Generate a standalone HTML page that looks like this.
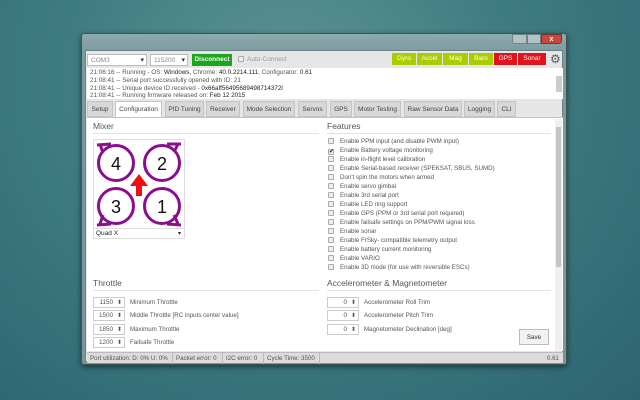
<!DOCTYPE html>
<html><head><style>
*{margin:0;padding:0;box-sizing:border-box}
body{width:640px;height:400px;overflow:hidden;position:relative;font-family:"Liberation Sans",sans-serif;font-size:6.5px;color:#333;
background:radial-gradient(ellipse at 45% 20%,#5b9393 0%,#3f7c82 45%,#2c6470 100%);}
.a{position:absolute}
.win{left:81px;top:33px;width:486px;height:332px;background:linear-gradient(#8eaaac,#7a9a9d 20px,#7b9699);border:1px solid #3d5557;border-radius:3px;box-shadow:0 2px 6px rgba(0,0,0,.5)}
.inner{left:3px;top:16px;width:478px;height:312px;background:#e6e6e6;border:1px solid #6b8385}
.sel{background:#fff;border:1px solid #bbb;height:12px;color:#888;padding:2px 3px;font-size:6.5px}
.sel:after{content:"▾";position:absolute;right:2px;top:1px;color:#333;font-size:7px}
.sen{top:2px;height:12px;color:#fff;text-align:center;line-height:12px;font-size:6.5px}
.g{background:#aacc00}.r{background:#e1141c}
.tab{top:0;height:16px;border:1px solid #c4c4c4;background:#d8d8d8;line-height:15px;text-align:center;font-size:6.5px;color:#444}
.feat{left:1px;font-size:6.2px;color:#555;white-space:nowrap}
.cb{display:inline-block;width:6px;height:6px;border:1px solid #aaa;background:#eee;margin-right:6px;vertical-align:-1px;border-radius:1px}
.h{font-size:8.5px;color:#555}
.hl{height:1px;background:#e2e2e2}
.inp{width:32px;height:11px;border:1px solid #ccc;background:#fff;text-align:right;padding-right:11px;font-size:6.3px;line-height:10px;color:#555}
.inp:after{content:"⬍";position:absolute;right:2px;top:0;font-size:6px;color:#555}
.lb{font-size:6.2px;color:#555;white-space:nowrap}
.st{top:0;height:11px;line-height:11px;border-right:1px solid #bbb;padding:0 3px;font-size:6.2px;color:#555;white-space:nowrap;overflow:hidden}
</style></head><body>
<div class="a win">
 <div class="a" style="right:4px;top:0;width:50px;height:11px;">
  <div class="a" style="left:0;top:0;width:15px;height:10px;background:#b3c2c4;border:1px solid #6e8587;border-radius:0 0 0 3px"></div>
  <div class="a" style="left:15px;top:0;width:14px;height:10px;background:#b3c2c4;border:1px solid #6e8587"></div>
  <div class="a" style="left:29px;top:0;width:21px;height:10px;background:#c8493b;border:1px solid #6e3a33;border-radius:0 0 3px 0;color:#fff;font-size:7px;text-align:center;line-height:9px;font-weight:bold">x</div>
 </div>
 <div class="a inner">
  <div class="a sel" style="left:1px;top:3px;width:60px">COM3</div>
  <div class="a sel" style="left:64px;top:3px;width:38px">115200</div>
  <div class="a" style="left:106px;top:3px;width:40px;height:12px;background:#1ea51e;color:#fff;font-weight:bold;text-align:center;line-height:12px;font-size:6.5px">Disconnect</div>
  <div class="a" style="left:152px;top:5px;color:#999"><span class="cb" style="margin-right:3px"></span>Auto-Connect</div>
  <div class="a sen g" style="left:306px;width:24px">Gyro</div>
  <div class="a sen g" style="left:331px;width:25px">Accel</div>
  <div class="a sen g" style="left:357px;width:25px">Mag</div>
  <div class="a sen g" style="left:383px;width:24px">Baro</div>
  <div class="a sen r" style="left:408px;width:23px">GPS</div>
  <div class="a sen r" style="left:432px;width:28px">Sonar</div>
  <div class="a" style="left:464px;top:1px;font-size:12px;color:#555">⚙</div>
  <div class="a" style="left:1px;top:17px;width:476px;height:31px;background:#fff;font-size:6.3px;line-height:7.8px;padding:1px 3px;color:#555">
   21:06:16 -- Running - OS: <span style="color:#222">Windows</span>, Chrome: <span style="color:#222">40.0.2214.111</span>, Configurator: <span style="color:#222">0.61</span><br>
   21:08:41 -- Serial port successfully opened with ID: 21<br>
   21:08:41 -- Unique device ID received - <span style="color:#222">0x66aff56495689498714372l</span><br>
   21:08:41 -- Running firmware released on: <span style="color:#222">Feb 12 2015</span>
   <div class="a" style="right:1px;top:8px;width:6px;height:16px;background:#ccc"></div>
  </div>
  <div class="a" style="left:0;top:50px;width:476px;height:17px">
   <div class="a tab" style="left:1px;width:26px">Setup</div>
   <div class="a tab" style="left:29px;width:47px;background:#fff;border-bottom-color:#fff;height:17px">Configuration</div>
   <div class="a tab" style="left:79px;width:39px">PID Tuning</div>
   <div class="a tab" style="left:120px;width:34px">Receiver</div>
   <div class="a tab" style="left:157px;width:52px">Mode Selection</div>
   <div class="a tab" style="left:212px;width:29px">Servos</div>
   <div class="a tab" style="left:244px;width:22px">GPS</div>
   <div class="a tab" style="left:268px;width:47px">Motor Testing</div>
   <div class="a tab" style="left:318px;width:58px">Raw Sensor Data</div>
   <div class="a tab" style="left:378px;width:31px">Logging</div>
   <div class="a tab" style="left:411px;width:19px">CLI</div>
  </div>
  <div class="a" style="left:1px;top:66px;width:476px;height:234px;background:#fff;border-top:1px solid #c4c4c4">
   <div class="a" style="right:1px;top:1px;width:7px;height:232px;background:#f0f0f0">
    <div class="a" style="left:1px;top:8px;width:5px;height:140px;background:#c4c4c4"></div>
   </div>
   <div class="a h" style="left:6px;top:3px">Mixer</div>
   <div class="a hl" style="left:6px;top:15px;width:226px"></div>
   <div class="a h" style="left:240px;top:3px">Features</div>
   <div class="a hl" style="left:240px;top:15px;width:224px"></div>
   <div class="a" style="left:6px;top:21px;width:92px;height:100px;border:1px solid #ddd;background:#fff">
    <svg width="90" height="88" viewBox="0 0 90 88" class="a" style="left:0;top:0">
     <g fill="none" stroke="#8a0f8e" stroke-width="3">
      <circle cx="22" cy="23" r="17.5"/><circle cx="68" cy="23" r="17.5"/>
      <circle cx="22" cy="66" r="17.5"/><circle cx="68" cy="66" r="17.5"/>
      <path d="M3 5 L17 4 M6 4 L9 13"/><path d="M87 4 L73 4 M84 4 L80 12"/>
      <path d="M3 85 L17 84 M6 84 L9 75"/><path d="M87 85 L73 84 M84 84 L80 75"/>
     </g>
     <g font-family="Liberation Sans" font-size="18" fill="#111" text-anchor="middle">
      <text x="22" y="30">4</text><text x="68" y="30">2</text><text x="22" y="73">3</text><text x="68" y="73">1</text>
     </g>
     <path d="M45 34 L54 46 L48 46 L48 56 L42 56 L42 46 L36 46Z" fill="#ee1111"/>
    </svg>
    <div class="a" style="left:0;top:88px;width:90px;height:11px;border-top:1px solid #ddd;font-size:6.5px;line-height:10px;padding-left:2px;color:#223">Quad X<span class="a" style="right:3px;top:0;font-size:6px">▾</span></div>
   </div>
   <div class="a" style="left:240px;top:20px;width:220px;height:140px">
    <div class="a feat" style="top:0"><span class="cb"></span>Enable PPM input (and disable PWM input)</div>
    <div class="a feat" style="top:9px"><span class="cb" style="font-size:6px;line-height:4px;color:#222">✔</span>Enable Battery voltage monitoring</div>
    <div class="a feat" style="top:18px"><span class="cb"></span>Enable in-flight level calibration</div>
    <div class="a feat" style="top:27px"><span class="cb"></span>Enable Serial-based receiver (SPEKSAT, SBUS, SUMD)</div>
    <div class="a feat" style="top:36px"><span class="cb"></span>Don't spin the motors when armed</div>
    <div class="a feat" style="top:45px"><span class="cb"></span>Enable servo gimbal</div>
    <div class="a feat" style="top:54px"><span class="cb"></span>Enable 3rd serial port</div>
    <div class="a feat" style="top:63px"><span class="cb"></span>Enable LED ring support</div>
    <div class="a feat" style="top:72px"><span class="cb"></span>Enable GPS (PPM or 3rd serial port required)</div>
    <div class="a feat" style="top:81px"><span class="cb"></span>Enable failsafe settings on PPM/PWM signal loss</div>
    <div class="a feat" style="top:90px"><span class="cb"></span>Enable sonar</div>
    <div class="a feat" style="top:99px"><span class="cb"></span>Enable FrSky- compatible telemetry output</div>
    <div class="a feat" style="top:108px"><span class="cb"></span>Enable battery current monitoring</div>
    <div class="a feat" style="top:117px"><span class="cb"></span>Enable VARIO</div>
    <div class="a feat" style="top:126px"><span class="cb"></span>Enable 3D mode (for use with reversible ESCs)</div>
   </div>
   <div class="a h" style="left:6px;top:160px">Throttle</div>
   <div class="a hl" style="left:6px;top:172px;width:226px"></div>
   <div class="a h" style="left:240px;top:160px">Accelerometer &amp; Magnetometer</div>
   <div class="a hl" style="left:240px;top:172px;width:224px"></div>
   <div class="a inp" style="left:6px;top:179px">1150</div><div class="a lb" style="left:43px;top:181px">Minimum Throttle</div>
   <div class="a inp" style="left:6px;top:192px">1500</div><div class="a lb" style="left:43px;top:194px">Middle Throttle [RC inputs center value]</div>
   <div class="a inp" style="left:6px;top:206px">1850</div><div class="a lb" style="left:43px;top:208px">Maximum Throttle</div>
   <div class="a inp" style="left:6px;top:219px">1200</div><div class="a lb" style="left:43px;top:221px">Failsafe Throttle</div>
   <div class="a inp" style="left:240px;top:179px">0</div><div class="a lb" style="left:277px;top:181px">Accelerometer Roll Trim</div>
   <div class="a inp" style="left:240px;top:192px">0</div><div class="a lb" style="left:277px;top:194px">Accelerometer Pitch Trim</div>
   <div class="a inp" style="left:240px;top:206px">0</div><div class="a lb" style="left:277px;top:208px">Magnetometer Declination [deg]</div>
   <div class="a" style="left:432px;top:211px;width:30px;height:16px;border:1px solid #bbb;background:#f2f2f2;text-align:center;line-height:15px;font-size:6.3px;color:#333">Save</div>
  </div>
  <div class="a" style="left:1px;top:301px;width:476px;height:11px;background:#dcdcdc;border-top:1px solid #bbb">
   <div class="a st" style="left:0;width:86px">Port utilization: D: 0% U: 0%</div>
   <div class="a st" style="left:86px;width:50px">Packet error: 0</div>
   <div class="a st" style="left:136px;width:41px">I2C error: 0</div>
   <div class="a st" style="left:177px;width:56px">Cycle Time: 3500</div>
   <div class="a" style="right:4px;top:0;line-height:11px;font-size:6.2px;color:#555">0.61</div>
  </div>
 </div>
</div>
</body></html>
